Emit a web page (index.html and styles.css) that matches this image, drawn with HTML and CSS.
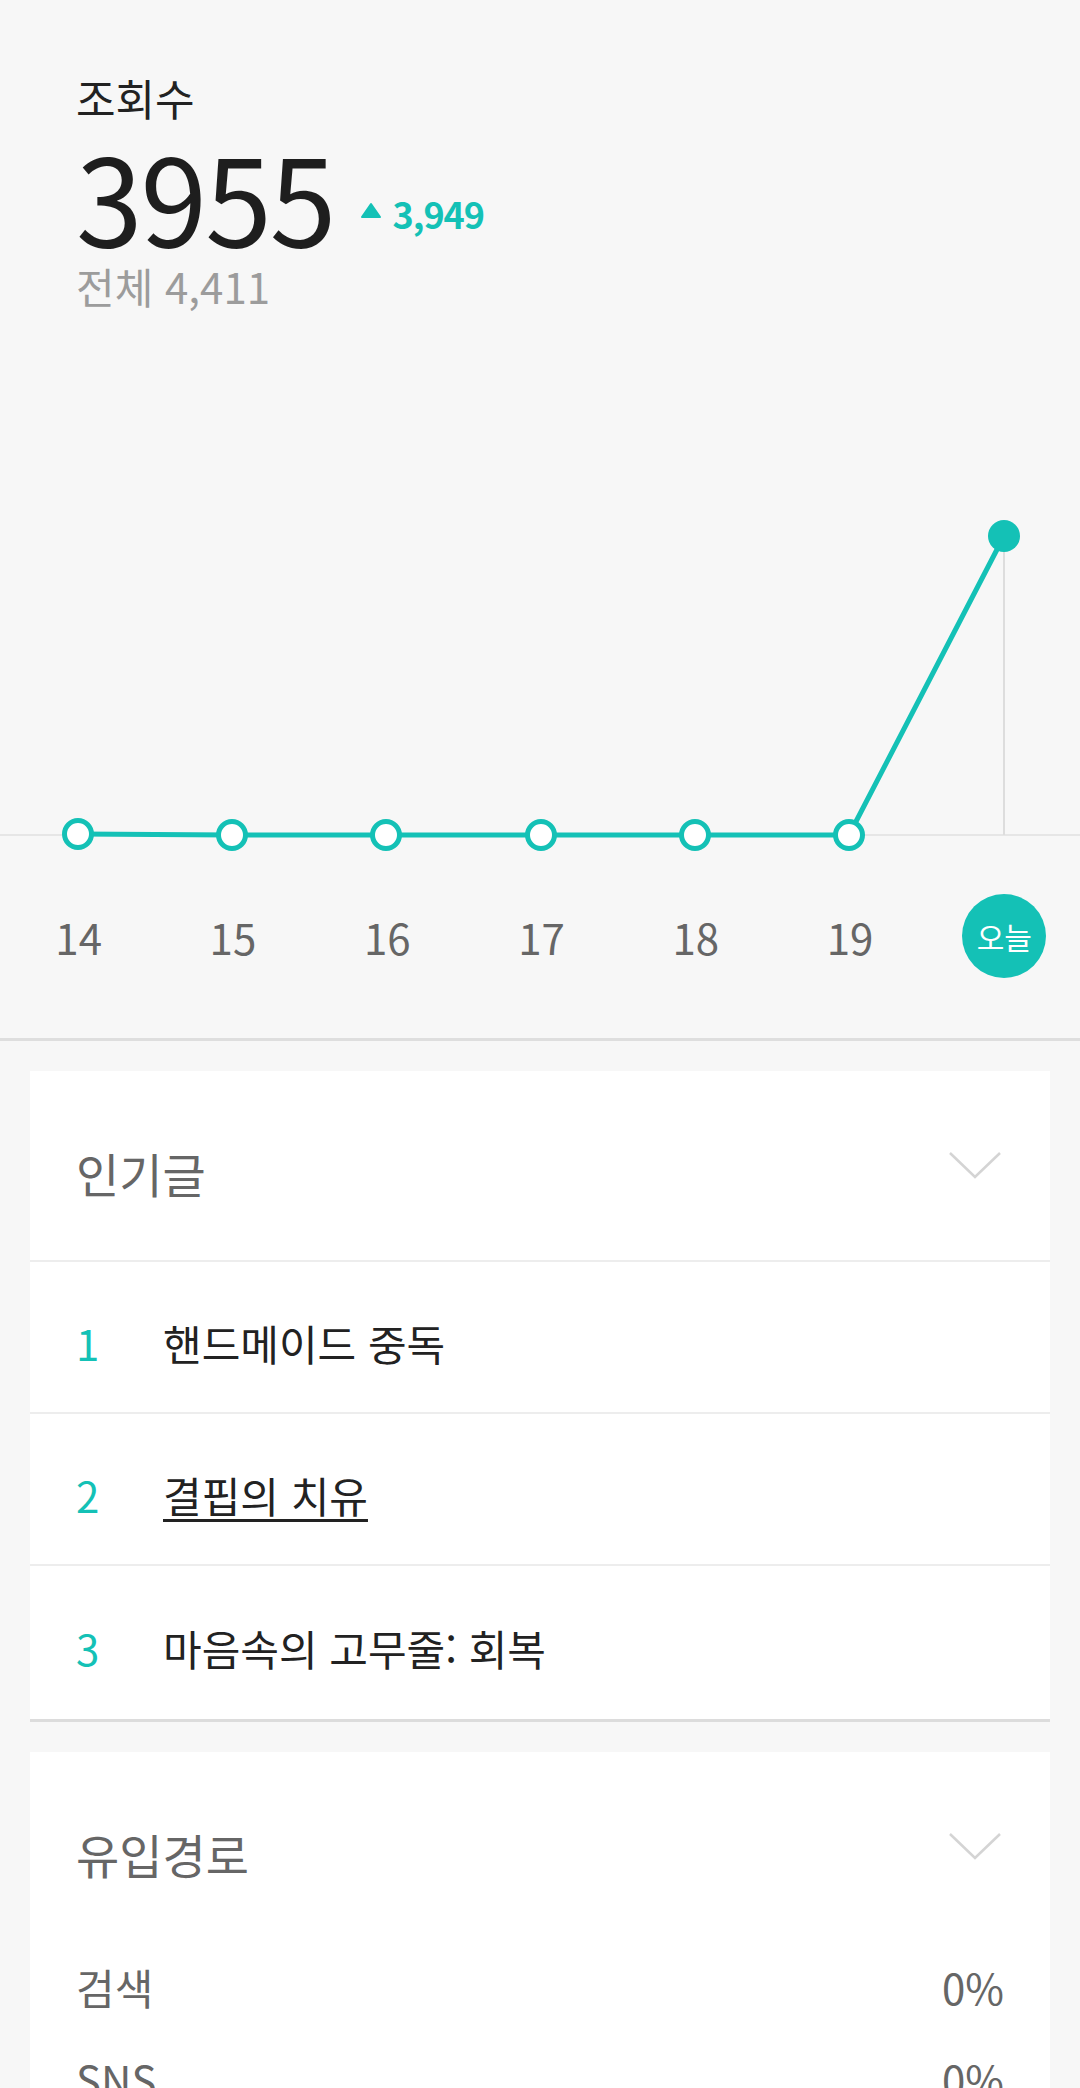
FILE: index.html
```html
<!DOCTYPE html>
<html lang="ko">
<head>
  <meta charset="UTF-8" />
  <meta name="viewport" content="width=device-width, initial-scale=1.0"/>
  <title>블로그 통계</title>
<link rel="stylesheet" href="styles.css">
</head>
<body>
  <div class="stats">
    <!-- 조회수 요약 -->
    <div class="summary">
      <div class="summary-label">조회수</div>
      <div class="summary-count">3955<span class="summary-delta"><svg class="delta-arrow" viewBox="0 0 22 17"><path d="M11 2 L20 15 L2 15 Z" fill="#14c1b6" stroke="#14c1b6" stroke-width="2" stroke-linejoin="round"/></svg>3,949</span></div>
      <div class="summary-total">전체 4,411</div>
    </div>

    <!-- 일별 그래프 -->
    <div class="chart">
      <svg class="chart-graph" viewBox="0 0 1080 560">
        <line x1="0" y1="524" x2="1080" y2="524" stroke="#e6e6e6" stroke-width="2"/>
        <line x1="1004" y1="225" x2="1004" y2="524" stroke="#dddddd" stroke-width="2"/>
        <polyline points="78,523 232,524 386,524 541,524 695,524 849,524 1004,225" fill="none" stroke="#14c1b6" stroke-width="5" stroke-linejoin="round"/>
        <circle cx="78" cy="523" r="13.5" fill="#fff" stroke="#14c1b6" stroke-width="5"/>
        <circle cx="232" cy="524" r="13.5" fill="#fff" stroke="#14c1b6" stroke-width="5"/>
        <circle cx="386" cy="524" r="13.5" fill="#fff" stroke="#14c1b6" stroke-width="5"/>
        <circle cx="541" cy="524" r="13.5" fill="#fff" stroke="#14c1b6" stroke-width="5"/>
        <circle cx="695" cy="524" r="13.5" fill="#fff" stroke="#14c1b6" stroke-width="5"/>
        <circle cx="849" cy="524" r="13.5" fill="#fff" stroke="#14c1b6" stroke-width="5"/>
        <circle cx="1004" cy="225" r="16" fill="#14c1b6"/>
      </svg>
      <div class="chart-days">
        <span class="day">14</span>
        <span class="day">15</span>
        <span class="day">16</span>
        <span class="day">17</span>
        <span class="day">18</span>
        <span class="day">19</span>
        <span class="day"><span class="day-today">오늘</span></span>
      </div>
    </div>

    <!-- 인기글 -->
    <div class="card">
      <div class="card-header">
        <span class="card-title">인기글</span>
        <svg class="card-toggle" viewBox="0 0 54 29"><polyline points="2,2 27,26 52,2" fill="none" stroke="#d4d4d4" stroke-width="2.5"/></svg>
      </div>
      <div class="post">
        <span class="post-rank">1</span>
        <span class="post-title">핸드메이드 중독</span>
      </div>
      <div class="post">
        <span class="post-rank">2</span>
        <span class="post-title post-title-active">결핍의 치유</span>
      </div>
      <div class="post">
        <span class="post-rank">3</span>
        <span class="post-title">마음속의 고무줄: 회복</span>
      </div>
    </div>

    <!-- 유입경로 -->
    <div class="card">
      <div class="card-header card-header-plain">
        <span class="card-title">유입경로</span>
        <svg class="card-toggle" viewBox="0 0 54 29"><polyline points="2,2 27,26 52,2" fill="none" stroke="#d4d4d4" stroke-width="2.5"/></svg>
      </div>
      <div class="source">
        <span>검색</span>
        <span>0%</span>
      </div>
      <div class="source">
        <span>SNS</span>
        <span>0%</span>
      </div>
    </div>
  </div>
</body>
</html>
```

FILE: styles.css
```css
body {
  margin: 0;
  padding: 0;
  background-color: #f7f7f7;
  font-family: "Noto Sans CJK KR", "Noto Sans", sans-serif;
  color: #222;
}

.stats {
  width: 1080px;
}

/* summary */

.summary {
  padding: 72px 76px 0;
}

.summary-label {
  font-size: 43px;
  line-height: 50px;
  color: #222;
}

.summary-count {
  margin-top: 13px;
  font-size: 120px;
  line-height: 120px;
  color: #1e1e1e;
  letter-spacing: -2px;
}

.summary-delta {
  display: inline-block;
  margin-left: 26px;
  vertical-align: 18px;
  font-size: 36px;
  line-height: 40px;
  font-weight: bold;
  color: #14c1b6;
  letter-spacing: -1px;
}

.delta-arrow {
  width: 22px;
  height: 17px;
  margin-right: 10px;
  vertical-align: 10px;
}

.summary-total {
  margin-top: 6px;
  font-size: 42px;
  line-height: 50px;
  color: #9c9c9c;
}

/* chart */

.chart {
  border-bottom: 3px solid #dedede;
  padding-bottom: 60px;
}

.chart-graph {
  display: block;
  width: 1080px;
  height: 560px;
}

.chart-days {
  display: grid;
  grid-template-columns: repeat(7, 1fr);
  margin-top: 23px;
  height: 84px;
}

.day {
  display: flex;
  justify-content: center;
  align-items: center;
  padding-left: 3px;
  font-size: 42px;
  color: #666;
}

.day-today {
  display: flex;
  justify-content: center;
  align-items: center;
  width: 84px;
  height: 84px;
  border-radius: 50%;
  background-color: #14c1b6;
  color: #fff;
  font-size: 30px;
}

/* cards */

.card {
  margin: 30px 30px 0;
  background-color: #fff;
}

.card-header {
  display: flex;
  justify-content: space-between;
  align-items: center;
  height: 189px;
  padding: 0 48px 0 46px;
  border-bottom: 2px solid #ededed;
}

.card-header-plain {
  border-bottom: none;
  height: 188px;
}

.card-title {
  padding-top: 14px;
  font-size: 47px;
  color: #666;
}

.card-toggle {
  width: 54px;
  height: 29px;
}

.post {
  display: flex;
  align-items: center;
  height: 152px;
  padding: 10px 46px 0;
  box-sizing: border-box;
  border-bottom: 2px solid #ededed;
}

.post:last-child {
  height: 156px;
  border-bottom: 3px solid #dcdcdc;
}

.post-rank {
  width: 87px;
  font-size: 42px;
  color: #14c1b6;
}

.post-title {
  font-size: 42px;
  color: #222;
}

.post-title-active {
  text-decoration: underline;
  text-decoration-thickness: 3px;
  text-underline-offset: 6px;
}

.source {
  display: flex;
  justify-content: space-between;
  align-items: center;
  height: 92px;
  padding: 0 46px;
  font-size: 42px;
  color: #666;
}
```
